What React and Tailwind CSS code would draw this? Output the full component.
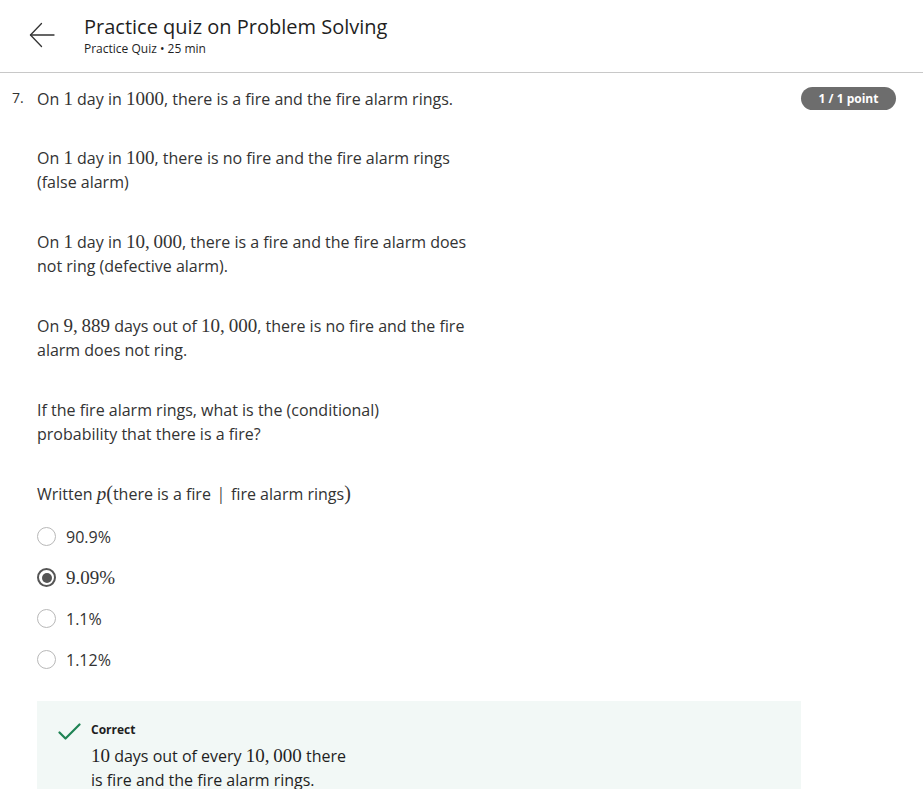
import React from "react";

const M = ({ children, className = "" }) => (
  <span className={"font-['Liberation_Serif',serif] text-[19px] leading-none " + className}>{children}</span>
);

const Radio = ({ checked, children }) => (
  <div className="flex h-[41px] items-center">
    {checked ? (
      <span className="flex h-[19px] w-[19px] items-center justify-center rounded-full border-2 border-[#555]">
        <span className="h-[10px] w-[10px] rounded-full bg-[#555]" />
      </span>
    ) : (
      <span className="h-[19px] w-[19px] rounded-full border-[1.5px] border-[#b8b8b8]" />
    )}
    <span className="ml-[10px] text-[16px] leading-[24px]">{children}</span>
  </div>
);

export default function App() {
  return (
    <div className="h-[789px] w-[923px] overflow-hidden bg-white font-['Open_Sans',sans-serif] text-[#333]">
      <header className="flex h-[73px] items-center border-b border-[#c8c8c8] pl-[29px] pb-[2px]">
        <svg width="26" height="26" viewBox="0 0 26 26" fill="none" stroke="#333" strokeWidth="1.3" strokeLinecap="round" strokeLinejoin="round">
          <path d="M25 13H1.5" />
          <path d="M12.5 1.5L1.5 13l11 11.5" />
        </svg>
        <div className="ml-[29px] flex flex-col">
          <div className="text-[20px] leading-[26px] text-[#1f1f1f]">Practice quiz on Problem Solving</div>
          <div className="text-[12px] leading-[17px] text-[#1f1f1f]">Practice Quiz • 25 min</div>
        </div>
      </header>

      <div className="flex pt-[14px] pr-[27px]">
        <div className="w-[37px] pl-[12px] text-[14px] leading-[22px]">7.</div>
        <div className="flex-1">
          <div className="flex items-start justify-between">
            <p className="w-[440px] text-[16px] leading-[24px]">
              On <M>1</M> day in <M>1000</M>, there is a fire and the fire alarm rings.
            </p>
            <span className="flex h-[23px] w-[95px] items-center justify-center rounded-full bg-[#6d6d6d] text-[12px] font-bold text-white">
              1 / 1 point
            </span>
          </div>
          <div className="w-[440px] text-[16px] leading-[24px]">
            <p className="mt-[35px]">
              On <M>1</M> day in <M>100</M>, there is no fire and the fire alarm rings (false alarm)
            </p>
            <p className="mt-[36px]">
              On <M>1</M> day in <M>10,&#8201;000</M>, there is a fire and the fire alarm does not ring (defective alarm).
            </p>
            <p className="mt-[36px]">
              On <M>9,&#8201;889</M> days out of <M>10,&#8201;000</M>, there is no fire and the fire alarm does not ring.
            </p>
            <p className="mt-[36px]">
              If the fire alarm rings, what is the (conditional)
              <br />
              probability that there is a fire?
            </p>
            <p className="mt-[36px]">
              Written <M className="italic">p</M>
              <M className="text-[20px]">(</M>there is a fire <M className="mx-[4px]">|</M> fire alarm rings<M className="text-[20px]">)</M>
            </p>
          </div>

          <div className="mt-[10px] flex flex-col">
            <Radio>90.9%</Radio>
            <Radio checked>
              <M>9.09%</M>
            </Radio>
            <Radio>1.1%</Radio>
            <Radio>1.12%</Radio>
          </div>

          <div className="mt-[21px] flex w-[764px] bg-[#f2f8f6] pt-[20px] pb-[40px] pl-[21px]">
            <svg width="24" height="18" viewBox="0 0 24 18" fill="none" stroke="#1f8354" strokeWidth="2.2" strokeLinecap="round" strokeLinejoin="round" className="mt-[2px]">
              <path d="M1.5 9.5L7.5 15.5L21.5 1.5" />
            </svg>
            <div className="ml-[9px] flex flex-col">
              <div className="text-[12px] font-bold leading-[18px] text-[#1f1f1f]">Correct</div>
              <p className="mt-[5px] w-[264px] text-[16px] leading-[24px] text-[#1f1f1f]">
                <M>10</M> days out of every <M>10,&#8201;000</M> there is fire and the fire alarm rings.
              </p>
            </div>
          </div>
        </div>
      </div>
    </div>
  );
}
